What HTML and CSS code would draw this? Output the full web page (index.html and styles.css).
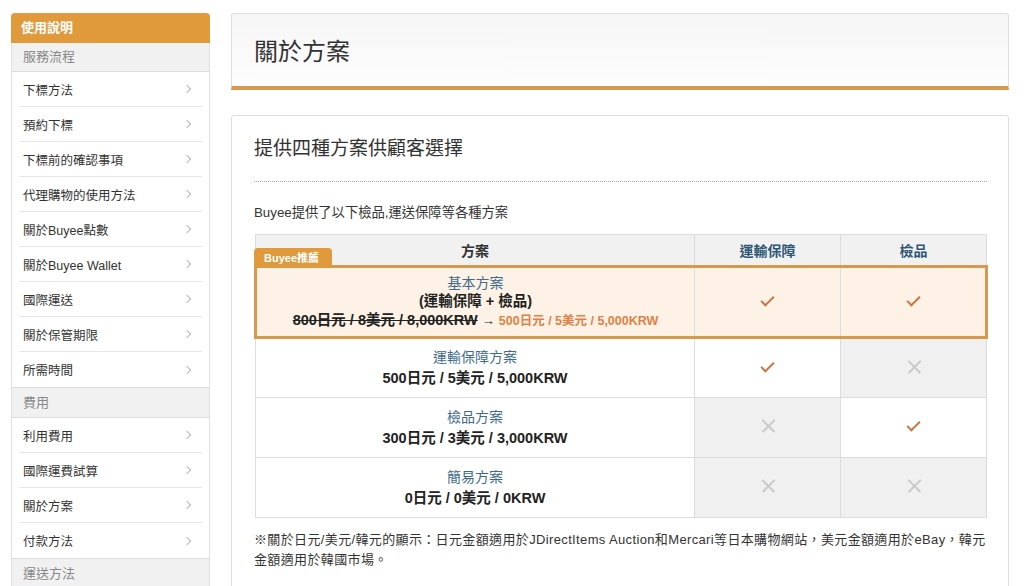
FILE: index.html
```html
<!DOCTYPE html>
<html lang="zh-Hant">
<head>
<meta charset="utf-8">
<link rel="stylesheet" href="styles.css">
</head>
<body>
<div class="page">
  <aside class="side">
    <div class="side-head">使用說明</div>
    <div class="side-sec">服務流程</div>
    <ul class="side-list">
      <li><span>下標方法</span><i class="chev"></i></li>
      <li><span>預約下標</span><i class="chev"></i></li>
      <li><span>下標前的確認事項</span><i class="chev"></i></li>
      <li><span>代理購物的使用方法</span><i class="chev"></i></li>
      <li><span>關於Buyee點數</span><i class="chev"></i></li>
      <li><span>關於Buyee Wallet</span><i class="chev"></i></li>
      <li><span>國際運送</span><i class="chev"></i></li>
      <li><span>關於保管期限</span><i class="chev"></i></li>
      <li><span>所需時間</span><i class="chev"></i></li>
    </ul>
    <div class="side-sec">費用</div>
    <ul class="side-list">
      <li><span>利用費用</span><i class="chev"></i></li>
      <li><span>國際運費試算</span><i class="chev"></i></li>
      <li><span>關於方案</span><i class="chev"></i></li>
      <li><span>付款方法</span><i class="chev"></i></li>
    </ul>
    <div class="side-sec">運送方法</div>
  </aside>
  <main class="main">
    <div class="title-card"><h1>關於方案</h1></div>
    <section class="card">
      <h2>提供四種方案供顧客選擇</h2>
      <p class="lead">Buyee提供了以下檢品,運送保障等各種方案</p>
      <table class="plans">
        <colgroup><col class="col-plan"><col class="col-opt"><col class="col-opt"></colgroup>
        <thead>
          <tr><th class="c-plan">方案</th><th class="c-opt">運輸保障</th><th class="c-opt">檢品</th></tr>
        </thead>
        <tbody>
          <tr class="hl">
            <td class="plan">
              <span class="badge">Buyee推薦</span>
              <div class="pname">基本方案</div>
              <div class="pbold">(運輸保障 + 檢品)</div>
              <div class="pprice"><s>800日元 / 8美元 / 8,000KRW</s> <span class="arrow">→</span> <span class="new">500日元 / 5美元 / 5,000KRW</span></div>
            </td>
            <td class="yes"><i class="check"></i></td>
            <td class="yes"><i class="check"></i></td>
          </tr>
          <tr>
            <td class="plan"><div class="pname">運輸保障方案</div><div class="pbold">500日元 / 5美元 / 5,000KRW</div></td>
            <td class="yes"><i class="check"></i></td>
            <td class="no"><i class="cross"></i></td>
          </tr>
          <tr>
            <td class="plan"><div class="pname">檢品方案</div><div class="pbold">300日元 / 3美元 / 3,000KRW</div></td>
            <td class="no"><i class="cross"></i></td>
            <td class="yes"><i class="check"></i></td>
          </tr>
          <tr>
            <td class="plan"><div class="pname">簡易方案</div><div class="pbold">0日元 / 0美元 / 0KRW</div></td>
            <td class="no"><i class="cross"></i></td>
            <td class="no"><i class="cross"></i></td>
          </tr>
        </tbody>
      </table>
      <p class="note">※關於日元/美元/韓元的顯示：日元金額適用於JDirectItems Auction和Mercari等日本購物網站，美元金額適用於eBay，韓元<br>金額適用於韓國市場。</p>
    </section>
  </main>
</div>
</body>
</html>
```

FILE: styles.css
```css
* { box-sizing: border-box; }
html, body { margin: 0; padding: 0; background: #fff; }
body {
  font-family: "Liberation Sans", "Noto Sans CJK TC", sans-serif;
  color: #333;
  font-size: 13px;
  overflow: hidden;
}
.page {
  display: flex;
  align-items: flex-start;
  gap: 21px;
  padding: 13px 15px 0 11px;
}
.side {
  width: 199px;
  flex: none;
  border: 1px solid #e0e0e0;
  border-top: none;
  border-radius: 4px 4px 0 0;
}
.side-head {
  background: #e0993b;
  color: #fff;
  font-weight: bold;
  font-size: 13px;
  height: 30px;
  line-height: 30px;
  padding-left: 10px;
  border-radius: 4px 4px 0 0;
  margin: 0 -1px;
}
.side-sec {
  background: #f1f1f1;
  color: #888;
  font-size: 13px;
  height: 29px;
  line-height: 28px;
  padding-left: 11px;
  border-bottom: 1px solid #dcdcdc;
}
.side-list + .side-sec { border-top: 1px solid #dcdcdc; height: 31px; line-height: 29px; }
.side-list {
  list-style: none;
  margin: 0;
  padding: 0 7px;
}
.side-list li {
  display: flex;
  justify-content: space-between;
  align-items: center;
  height: 35px;
  padding: 0 9px 0 4px;
  border-bottom: 1px solid #e6e6e6;
  color: #333;
  font-size: 12.5px;
}
.side-list li:last-child { border-bottom: none; }
.chev {
  width: 6px;
  height: 6px;
  border-top: 1px solid #b8b8b8;
  border-right: 1px solid #b8b8b8;
  transform: rotate(45deg);
  margin-right: 3px;
}
.main {
  width: 778px;
  flex: none;
}
.title-card {
  height: 77px;
  border: 1px solid #dedede;
  border-bottom: 4px solid #d59a4f;
  border-radius: 3px 3px 0 0;
  background: linear-gradient(#f6f6f6, #fdfdfd);
  padding-left: 22px;
  display: flex;
  align-items: center;
}
.title-card h1 {
  margin: 0;
  font-size: 24px;
  font-weight: normal;
  color: #333;
  padding-bottom: 2px;
}
.card {
  margin-top: 25px;
  border: 1px solid #dedede;
  border-radius: 3px;
  padding: 20px 21px 40px 22px;
}
.card h2 {
  margin: 0;
  font-size: 19px;
  font-weight: normal;
  color: #333;
  line-height: 26px;
  padding-bottom: 19px;
  border-bottom: 1px dotted #aaa;
}
.lead {
  margin: 22px 0 12px;
  font-size: 13.3px;
  line-height: 18px;
}
.plans {
  width: 731px;
  border-collapse: collapse;
  table-layout: fixed;
  text-align: center;
}
.col-plan { width: 439px; }
.col-opt { width: 146px; }
.plans th {
  background: #f1f1f1;
  border: 1px solid #dcdcdc;
  height: 32px;
  font-size: 14px;
  font-weight: bold;
}
.plans th.c-plan { color: #333; }
.plans th.c-opt { color: #2e5675; }
.plans td {
  border: 1px solid #dcdcdc;
  height: 60px;
  vertical-align: middle;
}
.plans td.plan { position: relative; }
.plans td.no { background: #f0f0f0; }
.plans tr.hl { border: 3px solid #d59a4f; }
.plans tr.hl td { background: #fdf2e5; height: 71px; }
.badge {
  position: absolute;
  left: -3px;
  top: -20px;
  width: 78px;
  height: 19px;
  line-height: 20px;
  background: #e0993b;
  color: #fff;
  font-size: 11px;
  font-weight: bold;
  border-radius: 4px 4px 0 0;
  text-align: left;
  padding-left: 10px;
}
.pname {
  color: #3e6b8d;
  font-size: 14px;
  line-height: 20px;
}
.pbold {
  font-weight: bold;
  font-size: 14.5px;
  line-height: 22px;
  color: #222;
}
.hl .pbold { line-height: 17px; }
.pprice {
  font-size: 14.5px;
  font-weight: bold;
  line-height: 20px;
  color: #222;
}
.pprice s { color: #222; }
.arrow { font-weight: normal; font-size: 13px; }
.new { color: #e08146; font-size: 12.5px; }
.check {
  display: inline-block;
  width: 13px;
  height: 7px;
  border-left: 2px solid #c87440;
  border-bottom: 2px solid #c87440;
  transform: rotate(-45deg);
  margin-bottom: 4px;
}
.cross {
  display: inline-block;
  position: relative;
  width: 14px;
  height: 14px;
}
.cross::before, .cross::after {
  content: "";
  position: absolute;
  left: -1px;
  top: 6px;
  width: 17px;
  height: 1.5px;
  background: #c9c9c9;
  transform: rotate(45deg);
}
.cross::after { transform: rotate(-45deg); }
.note {
  margin: 12px 0 0;
  font-size: 13px;
  line-height: 20px;
  letter-spacing: 0.36px;
}
```
